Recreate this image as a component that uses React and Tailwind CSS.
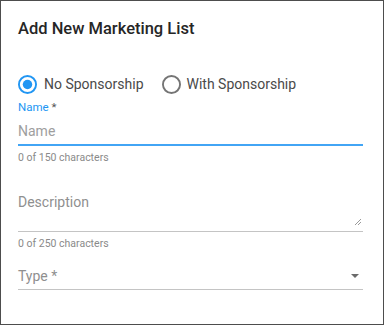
import { useState } from "react";

const font = { fontFamily: "Roboto, 'Liberation Sans', sans-serif" };

// radio circle drawn like the material one
const RadioDot = ({ checked }) => (
  <svg width="19" height="19" viewBox="0 0 20 20" className="shrink-0">
    <circle
      cx="10"
      cy="10"
      r="9"
      fill="none"
      stroke={checked ? "#2196f3" : "#757575"}
      strokeWidth="2"
    />
    {checked && <circle cx="10" cy="10" r="5" fill="#2196f3" />}
  </svg>
);

const Counter = ({ max, className = "" }) => (
  <div
    className={`text-[10.5px] leading-[14px] text-[#8a8a8a] ${className}`}
    style={{ fontFeatureSettings: "'zero' 1" }}
  >
    0 of {max} characters
  </div>
);

export default function App() {
  const [sponsor, setSponsor] = useState("none");

  return (
    <div
      className="w-[384px] h-[325px] border border-[#4d4d4d] bg-white flex flex-col pl-[17px] pr-[20px]"
      style={font}
    >
      <h2 className="mt-[12px] text-[16.5px] leading-8 font-medium text-[#262626]">
        Add New Marketing List
      </h2>

      <div className="mt-[27px] h-6 flex items-center text-[14px] text-[#4a4a4a]">
        <label
          className="flex items-center gap-[7px] cursor-pointer"
          onClick={() => setSponsor("none")}
        >
          <RadioDot checked={sponsor === "none"} />
          <span>No Sponsorship</span>
        </label>
        <label
          className="ml-[18px] flex items-center gap-[6px] cursor-pointer"
          onClick={() => setSponsor("with")}
        >
          <RadioDot checked={sponsor === "with"} />
          <span>With Sponsorship</span>
        </label>
      </div>

      <div className="mt-[3px] text-[11.5px] leading-4 text-[#2196f3]">
        Name <span className="text-[#555]">*</span>
      </div>
      <input
        type="text"
        placeholder="Name"
        className="mt-[4px] h-[27px] pb-[2px] text-[14px] leading-6 text-[#333] placeholder:text-[#9e9e9e] border-b-2 border-[#42a5f5] outline-none"
      />
      <Counter max={150} className="mt-[5px]" />

      <div className="relative mt-[25px] h-[42px] border-b border-[#c4c4c4]">
        <textarea
          placeholder="Description"
          className="w-full h-full resize-none text-[14px] leading-6 text-[#333] placeholder:text-[#8f8f8f] outline-none"
        />
        <svg
          width="8"
          height="8"
          viewBox="0 0 8 8"
          className="absolute right-[1px] bottom-[5px] pointer-events-none"
        >
          <path d="M1 7 L7 1 M4 7 L7 4" stroke="#9a9a9a" strokeWidth="1" />
        </svg>
      </div>
      <Counter max={250} className="mt-[5px]" />

      <div className="mt-[13px] h-[26px] flex items-start justify-between border-b border-[#c4c4c4]">
        <span className="text-[14px] leading-6 text-[#8f8f8f]">Type *</span>
        <svg width="8" height="4" viewBox="0 0 8 4" className="mt-[10px] mr-[4px]">
          <path d="M0 0 L8 0 L4 4 Z" fill="#6b6b6b" />
        </svg>
      </div>
    </div>
  );
}
